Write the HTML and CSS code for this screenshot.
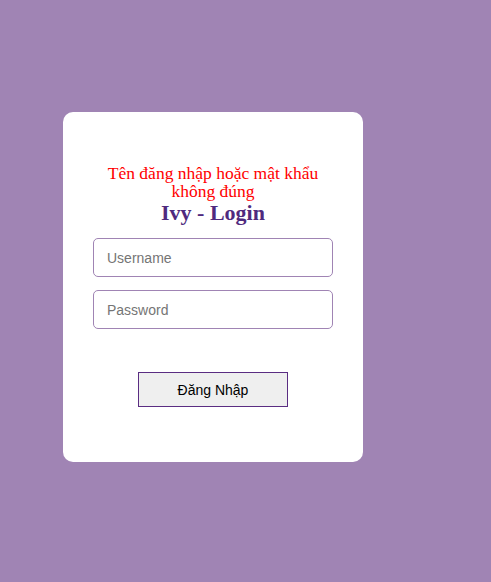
FILE: index.html
```html
<!DOCTYPE html>
<html>
<head>
<meta charset="utf-8">
<link rel="stylesheet" href="styles.css">
</head>
<body>
<div class="page">
  <form class="card">
    <p class="error">Tên đăng nhập hoặc mật khẩu không đúng</p>
    <h2 class="title">Ivy - Login</h2>
    <input class="field" type="text" placeholder="Username">
    <input class="field" type="password" placeholder="Password">
    <button class="btn" type="button">Đăng Nhập</button>
  </form>
</div>
</body>
</html>
```
FILE: styles.css
```css
html, body {
  margin: 0;
  padding: 0;
  height: 100%;
}
body {
  background: #a084b4;
  font-family: "Liberation Serif", serif;
}
.page {
  padding: 112px 0 0 63px;
}
.card {
  width: 300px;
  height: 350px;
  box-sizing: border-box;
  background: #fff;
  border-radius: 10px;
  padding: 52px 30px 0;
  display: flex;
  flex-direction: column;
  align-items: center;
}
.error {
  margin: 0;
  color: #ff0000;
  font-size: 17.5px;
  line-height: 18px;
  text-align: center;
  width: 235px;
}
.title {
  margin: 0 0 12px;
  color: #4f2a7e;
  font-size: 22px;
  line-height: 26px;
  font-weight: bold;
}
.field {
  width: 240px;
  height: 39px;
  box-sizing: border-box;
  border: 1px solid #a084b4;
  border-radius: 5px;
  padding: 0 13px;
  font-family: "Liberation Sans", Arial, sans-serif;
  font-size: 14px;
  margin: 0 0 13px;
  outline: none;
}
.field::placeholder {
  color: #757575;
}
.btn {
  margin-top: 30px;
  width: 150px;
  height: 35px;
  background: #efefef;
  border: 1px solid #5a2d82;
  font-family: "Liberation Sans", Arial, sans-serif;
  font-size: 14px;
  color: #000;
}
```
